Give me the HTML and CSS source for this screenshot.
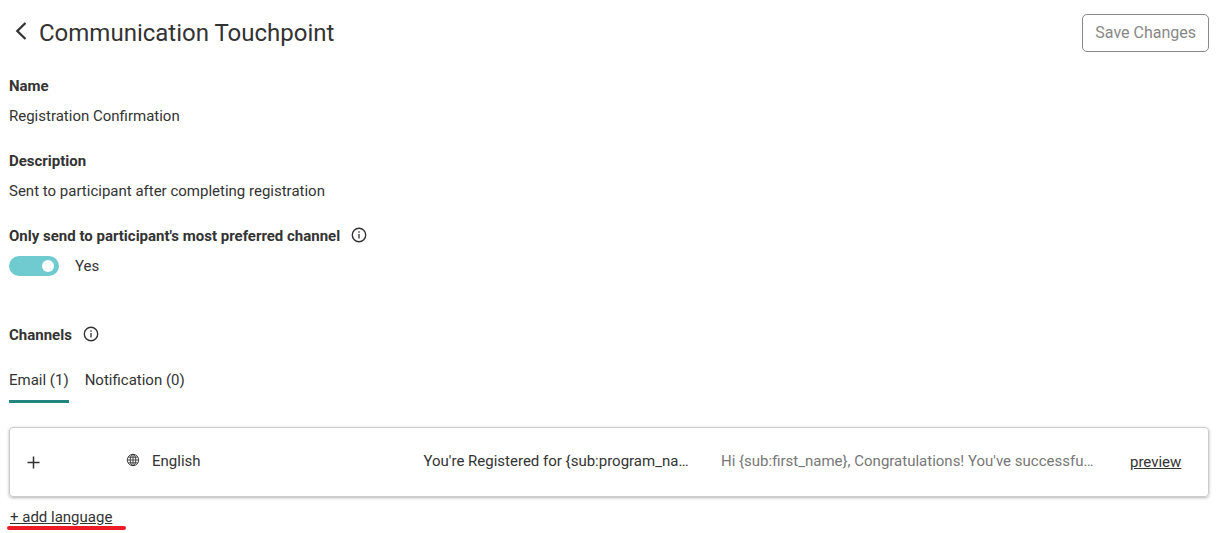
FILE: index.html
```html
<!DOCTYPE html>
<html lang="en">
<head>
    <meta charset="UTF-8">
    <meta name="viewport" content="width=device-width, initial-scale=1.0">
    <title>Communication Touchpoint</title>
    <link rel="stylesheet" href="styles.css">
</head>
<body>

    <header class="page-header">
        <a href="#" class="back" aria-label="Back">
            <svg width="12" height="18" viewBox="0 0 12 18"><path d="M10.5 1 L2.3 9 L10.5 17" fill="none" stroke="currentColor" stroke-width="2.3"/></svg>
        </a>
        <h1>Communication Touchpoint</h1>
        <button type="button" class="save">Save Changes</button>
    </header>

    <main>
        <section class="field">
            <h2>Name</h2>
            <p>Registration Confirmation</p>
        </section>

        <section class="field">
            <h2>Description</h2>
            <p>Sent to participant after completing registration</p>
        </section>

        <section class="field">
            <h2>
                <label for="preferred">Only send to participant's most preferred channel</label>
                <svg class="info" width="16" height="16" viewBox="0 0 16 16"><circle cx="8" cy="8" r="6.7" fill="none" stroke="currentColor" stroke-width="1.4"/><path d="M8 7v4.5M8 4.3v1.4" stroke="currentColor" stroke-width="1.3"/></svg>
            </h2>
            <div class="switch-row">
                <input type="checkbox" id="preferred" class="switch" checked>
                <span>Yes</span>
            </div>
        </section>

        <section class="channels">
            <h2>
                Channels
                <svg class="info" width="16" height="16" viewBox="0 0 16 16"><circle cx="8" cy="8" r="6.7" fill="none" stroke="currentColor" stroke-width="1.4"/><path d="M8 7v4.5M8 4.3v1.4" stroke="currentColor" stroke-width="1.3"/></svg>
            </h2>

            <div class="tabs">
                <button type="button" class="tab active">Email (1)</button>
                <button type="button" class="tab">Notification (0)</button>
            </div>

            <div class="card">
                <button type="button" class="expand" aria-label="Expand">
                    <svg width="13" height="13" viewBox="0 0 13 13"><path d="M6.5 0.5v12M0.5 6.5h12" stroke="currentColor" stroke-width="1.5"/></svg>
                </button>
                <div class="language">
                    <svg class="globe" width="14" height="14" viewBox="0 0 14 14" fill="none" stroke="currentColor" stroke-width="0.9"><circle cx="7" cy="7" r="5.7"/><ellipse cx="7" cy="7" rx="2.8" ry="5.7"/><path d="M7 1.3v11.4M1.3 7h11.4M2.2 4.2h9.6M2.2 9.8h9.6"/></svg>
                    <span>English</span>
                </div>
                <div class="subject">You're Registered for {sub:program_na…</div>
                <div class="body-text">Hi {sub:first_name}, Congratulations! You've successfu…</div>
                <a href="#" class="preview">preview</a>
            </div>

            <a href="#" class="add-language">+ add language</a>
        </section>
    </main>

</body>
</html>
```
FILE: styles.css
```css
body {
    margin: 0;
    padding: 14px 10px 0 9px;
    font-family: Roboto, sans-serif;
    font-size: 15px;
    line-height: 30px;
    color: #333;
    background: #fff;
}

h1, h2, p {
    margin: 0;
}

a {
    color: inherit;
}

button {
    font-family: inherit;
    color: inherit;
    background: none;
    border: none;
    padding: 0;
    cursor: pointer;
}

.page-header {
    display: flex;
    align-items: center;
    margin-bottom: 19px;
}

.back {
    display: flex;
    padding: 0 12px 4px 6px;
}

h1 {
    flex: 1;
    font-size: 24px;
    font-weight: 400;
}

.save {
    height: 38px;
    padding: 0 12px 2px;
    font-size: 16px;
    color: #888;
    border: 1px solid #888;
    border-radius: 5px;
}

.field {
    margin-bottom: 15px;
}

h2 {
    display: flex;
    align-items: center;
    gap: 11px;
    font-size: 15px;
    font-weight: 700;
}

.info {
    margin-bottom: 2px;
}

.switch-row {
    display: flex;
    align-items: center;
    gap: 16px;
}

.switch {
    appearance: none;
    display: flex;
    align-items: center;
    width: 50px;
    height: 20px;
    margin: 0;
    padding: 0 5px;
    box-sizing: border-box;
    border-radius: 10px;
    background: #bbb;
    cursor: pointer;
}

.switch::before {
    content: "";
    width: 12px;
    height: 12px;
    border-radius: 50%;
    background: #fff;
}

.switch:checked {
    justify-content: flex-end;
    background: #6fcbcf;
}

.channels {
    margin-top: 39px;
}

.tabs {
    display: flex;
    gap: 16px;
    margin: 15px 0 24px;
}

.tab {
    padding-bottom: 5px;
    font-size: 15px;
    line-height: 30px;
    border-bottom: 3px solid transparent;
}

.tab.active {
    border-bottom-color: #22857f;
}

.card {
    display: grid;
    grid-template-columns: 116px 8fr 8fr 11fr 78px;
    align-items: center;
    padding: 17px 0 19px;
    border: 1px solid #ccc;
    border-radius: 4px;
    box-shadow: 0 1px 3px rgba(0, 0, 0, 0.3);
}

.expand {
    display: flex;
    justify-self: start;
    padding: 3px 0 0 17px;
}

.language {
    display: flex;
    align-items: center;
    gap: 12px;
}

.globe {
    margin-bottom: 2px;
}

.subject,
.body-text {
    overflow: hidden;
    white-space: nowrap;
}

.body-text {
    color: #777;
}

.preview {
    padding-top: 2px;
}

.add-language {
    display: inline-block;
    margin-top: 5px;
    margin-left: 1px;
    position: relative;
}

/* red marker under the link */
.add-language::after {
    content: "";
    position: absolute;
    left: -3px;
    right: -14px;
    bottom: 2px;
    height: 4px;
    border-radius: 2px;
    background: #ed1c24;
}
```
